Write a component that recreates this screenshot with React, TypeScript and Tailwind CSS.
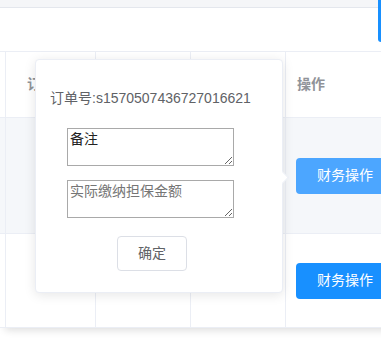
import { useState } from "react";

const font = { fontFamily: '"Liberation Sans", "Noto Sans CJK SC", sans-serif' };

function FinanceButton({ hover }: { hover?: boolean }) {
  return (
    <button
      className={
        hover
          ? "h-[36px] w-[100px] shrink-0 rounded-[4px] bg-[#4ca6ff] pl-[21px] text-left text-[14px] text-white"
          : "h-[36px] w-[100px] shrink-0 rounded-[4px] bg-[#1890ff] pl-[21px] text-left text-[14px] text-white"
      }
    >
      财务操作
    </button>
  );
}

export default function App() {
  const [remark, setRemark] = useState("备注");
  const [amount, setAmount] = useState("");

  return (
    <div className="relative h-[361px] w-[381px] overflow-hidden bg-white" style={font}>
      {/* top bar */}
      <div className="flex h-[51px]">
        <div className="flex-1">
          <div className="h-[8px] border-b border-[#e4e7ed] bg-[#f5f6f8]" />
        </div>
        <div className="h-[42px] w-[3px] rounded-bl-[3px] bg-[#1890ff]" />
      </div>

      {/* table */}
      <div className="w-[420px] shadow-[0_7px_8px_-5px_rgba(0,0,0,0.14)]">
        <div className="flex h-[67px] border-y border-[#ebeef5] bg-white text-[14px] font-semibold text-[#909399]">
          <div className="w-[5px]" />
          <div className="flex w-[90px] items-center border-l border-[#ebeef5] pl-[21px]">订单号</div>
          <div className="w-[95px] border-l border-[#ebeef5]" />
          <div className="w-[95px] border-l border-[#ebeef5]" />
          <div className="flex flex-1 items-center border-l border-[#ebeef5] pl-[11px]">操作</div>
        </div>
        <div className="flex h-[116px] border-b border-[#ebeef5] bg-[#f5f7fa]">
          <div className="w-[5px]" />
          <div className="w-[90px] border-l border-[#ebeef5]" />
          <div className="w-[95px] border-l border-[#ebeef5]" />
          <div className="w-[95px] border-l border-[#ebeef5]" />
          <div className="flex flex-1 items-center border-l border-[#ebeef5] pl-[10px]">
            <FinanceButton hover />
          </div>
        </div>
        <div className="flex h-[94px] border-b border-[#ebeef5] bg-white">
          <div className="w-[5px]" />
          <div className="w-[90px] border-l border-[#ebeef5]" />
          <div className="w-[95px] border-l border-[#ebeef5]" />
          <div className="w-[95px] border-l border-[#ebeef5]" />
          <div className="flex flex-1 items-center border-l border-[#ebeef5] pl-[10px]">
            <FinanceButton />
          </div>
        </div>
      </div>

      {/* popover */}
      <div className="absolute left-[35px] top-[59px] h-[234px] w-[248px] rounded-[4px] border border-[#ebeef5] bg-white pl-[14px] pt-[28px] shadow-[0_2px_12px_rgba(0,0,0,0.1)]">
        <div className="absolute right-[-5px] top-[113px] h-[9px] w-[9px] rotate-45 border-r border-t border-[#ebeef5] bg-white" />
        <p className="text-[14px] leading-[20px] text-[#606266]">订单号:s1570507436727016621</p>
        <div className="ml-[17px] mt-[20px] flex flex-col gap-[14px]">
          <textarea
            value={remark}
            onChange={(e) => setRemark(e.target.value)}
            className="block h-[38px] w-[167px] border border-[#a9a9a9] px-[2px] py-[1px] text-[14px] font-normal leading-[18px] text-[#222]"
          />
          <textarea
            value={amount}
            onChange={(e) => setAmount(e.target.value)}
            placeholder="实际缴纳担保金额"
            className="block h-[38px] w-[167px] border border-[#a9a9a9] px-[2px] py-[1px] text-[14px] font-normal leading-[18px] text-[#222] placeholder:text-[#757575]"
          />
        </div>
        <button className="ml-[67px] mt-[18px] block h-[35px] w-[70px] rounded-[4px] border border-[#dcdfe6] bg-white text-[14px] text-[#606266]">
          确定
        </button>
      </div>
    </div>
  );
}
